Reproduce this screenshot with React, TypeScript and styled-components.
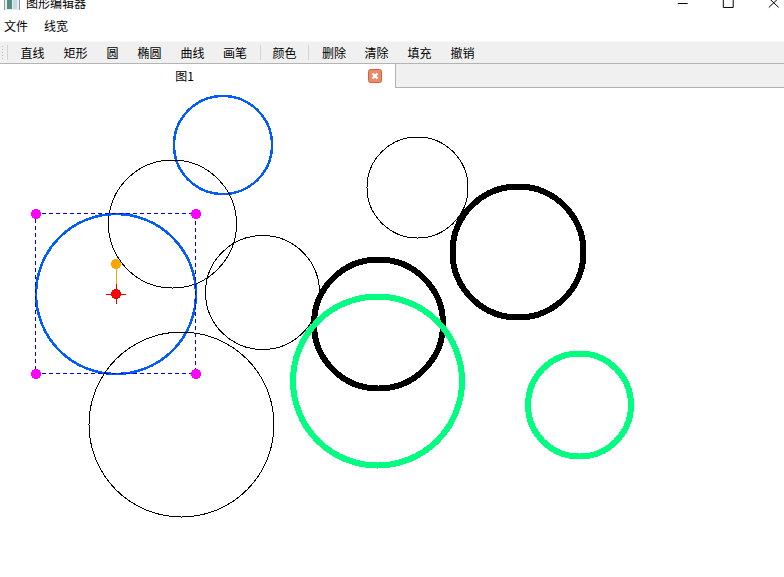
import React from "react";
import styled, { createGlobalStyle } from "styled-components";

const Global = createGlobalStyle`
  html, body { margin: 0; padding: 0; background: #fff; overflow: hidden; }
  body { font-family: "Noto Sans CJK SC", "Liberation Sans", sans-serif; font-size: 12px; color: #000; }
`;

const Window = styled.div`
  width: 784px;
  height: 577px;
  display: flex;
  flex-direction: column;
  overflow: hidden;
  background: #fff;
`;

const TitleBar = styled.div`
  height: 10px;
  flex: none;
  display: flex;
  align-items: flex-end;
  overflow: hidden;
  padding-left: 4px;
`;

const AppIcon = styled.svg`
  width: 16px;
  height: 16px;
  flex: none;
  margin-bottom: -1px;
`;

const TitleText = styled.span`
  margin-left: 6px;
  line-height: 16px;
  margin-bottom: -1px;
  font-size: 12px;
`;

const WindowButtons = styled.div`
  margin-left: auto;
  margin-right: -12px;
  display: flex;
  align-items: flex-end;
  height: 10px;
`;

const WindowButton = styled.svg`
  width: 45.5px;
  height: 10px;
  display: block;
`;

const MenuBar = styled.div`
  height: 31px;
  flex: none;
  display: flex;
  align-items: center;
  gap: 16px;
  padding: 1px 0 0 4px;
  box-sizing: border-box;
  line-height: 18px;
`;

const Toolbar = styled.div`
  height: 23px;
  flex: none;
  display: flex;
  align-items: center;
  box-sizing: border-box;
  background: #f0f0f0;
  border-top: 1px solid #f8f8f8;
  border-bottom: 1px solid #b4b4b4;
  padding-left: 1px;
`;

const Grip = styled.div`
  width: 3px;
  height: 16px;
  flex: none;
  background-image: radial-gradient(circle, #b8b8b8 0.7px, transparent 0.9px);
  background-size: 3px 3px;
`;

const Separator = styled.div<{ $m?: number }>`
  width: 1px;
  height: 15px;
  flex: none;
  background: #d4d4d4;
  margin: 0 ${(p) => p.$m ?? 5}px;
`;

const ToolButton = styled.div<{ $w: number }>`
  width: ${(p) => p.$w}px;
  flex: none;
  text-align: center;
  line-height: 18px;
  white-space: nowrap;
`;

const TabBar = styled.div`
  height: 24px;
  flex: none;
  display: flex;
  box-sizing: border-box;
  background: #fff;
`;

const Tab = styled.div`
  width: 396px;
  flex: none;
  position: relative;
  display: flex;
  align-items: center;
  justify-content: center;
  box-sizing: border-box;
  padding-right: 26px;
  border-right: 1px solid #b4b4b4;
  line-height: 18px;
`;

const TabClose = styled.svg`
  position: absolute;
  left: 368px;
  top: 5px;
  width: 14px;
  height: 14px;
`;

const TabRest = styled.div`
  flex: 1;
  background: #f0f0f0;
  border-bottom: 1px solid #b0b0b0;
  box-sizing: border-box;
`;

const Canvas = styled.svg`
  display: block;
  flex: 1;
  width: 784px;
`;

const tools = [
  { t: "直线", w: 43 },
  { t: "矩形", w: 43 },
  { t: "圆", w: 31 },
  { t: "椭圆", w: 43 },
  { t: "曲线", w: 43 },
  { t: "画笔", w: 42 },
];
const tools3 = [
  { t: "删除", w: 42 },
  { t: "清除", w: 43 },
  { t: "填充", w: 43 },
  { t: "撤销", w: 43 },
];

const OFFSET = 88;
const circles = [
  { cx: 223, cy: 145, r: 49, c: "#005cff", w: 2.5 },
  { cx: 172.5, cy: 224, r: 64, c: "#000", w: 1 },
  { cx: 116, cy: 294, r: 80, c: "#005cff", w: 2.5 },
  { cx: 262.5, cy: 292.5, r: 57, c: "#000", w: 1 },
  { cx: 181.5, cy: 424.5, r: 92.5, c: "#000", w: 1 },
  { cx: 417.5, cy: 187.5, r: 50.5, c: "#000", w: 1 },
  { cx: 518, cy: 252, r: 65.5, c: "#000", w: 6 },
  { cx: 378.5, cy: 324, r: 64.5, c: "#000", w: 6 },
  { cx: 377.5, cy: 381, r: 84.5, c: "#00ff80", w: 6 },
  { cx: 579.5, cy: 405, r: 51.5, c: "#00ff80", w: 6 },
];

const handles = [
  [36, 214],
  [196, 214],
  [36, 374],
  [196, 374],
];

export default function App() {
  return (
    <Window>
      <Global />
      <TitleBar>
        <AppIcon viewBox="0 0 16 16">
          <rect x="0.5" y="0.5" width="15" height="15" fill="#e8eef0" stroke="#8a9aa0" />
          <rect x="3" y="2" width="5" height="12" fill="#4f8f80" />
          <rect x="9" y="2" width="4" height="12" fill="#c8d8e0" />
        </AppIcon>
        <TitleText>图形编辑器</TitleText>
        <WindowButtons>
          <WindowButton viewBox="0 0 46 10">
            <path d="M18 3.5H28" stroke="#000" fill="none" />
          </WindowButton>
          <WindowButton viewBox="0 0 46 10">
            <path d="M18.5 0V7.5H28.5V0" stroke="#000" fill="none" />
          </WindowButton>
          <WindowButton viewBox="0 0 46 10">
            <path d="M18 -2L28 7.5M28 -2L18 7.5" stroke="#000" fill="none" />
          </WindowButton>
        </WindowButtons>
      </TitleBar>
      <MenuBar>
        <span>文件</span>
        <span>线宽</span>
      </MenuBar>
      <Toolbar>
        <Grip />
        <Separator $m={3} />
        {tools.map((x) => (
          <ToolButton key={x.t} $w={x.w}>{x.t}</ToolButton>
        ))}
        <Separator $m={4} />
        <ToolButton $w={39}>颜色</ToolButton>
        <Separator $m={4} />
        {tools3.map((x) => (
          <ToolButton key={x.t} $w={x.w}>{x.t}</ToolButton>
        ))}
      </Toolbar>
      <TabBar>
        <Tab>
          图1
          <TabClose viewBox="0 0 14 14">
            <rect x="0.5" y="0.5" width="13" height="13" rx="2" fill="#e98b68" stroke="#dc5a3c" />
            <path d="M4.5 4.5L9.5 9.5M9.5 4.5L4.5 9.5" stroke="#fff" strokeWidth="2.4" />
          </TabClose>
        </Tab>
        <TabRest />
      </TabBar>
      <Canvas viewBox={`0 ${OFFSET} 784 489`}>
        {circles.map((c, i) => (
          <circle key={i} cx={c.cx} cy={c.cy} r={c.r} fill="none" stroke={c.c} strokeWidth={c.w} shapeRendering="crispEdges" />
        ))}
        <rect x="35" y="213" width="160" height="160" fill="none" stroke="#0000e0" strokeDasharray="4 3" shapeRendering="crispEdges" />
        {handles.map(([x, y]) => (
          <circle key={`${x}-${y}`} cx={x} cy={y} r="5" fill="#ff00ff" shapeRendering="crispEdges" />
        ))}
        <path d="M116 264V294" stroke="#ffa500" strokeWidth="1" shapeRendering="crispEdges" />
        <circle cx="116" cy="264" r="5" fill="#ffa500" shapeRendering="crispEdges" />
        <path d="M106 294H126M116 284V304" stroke="#e00000" strokeWidth="1" shapeRendering="crispEdges" />
        <circle cx="116" cy="294" r="5" fill="#ff0000" shapeRendering="crispEdges" />
      </Canvas>
    </Window>
  );
}
